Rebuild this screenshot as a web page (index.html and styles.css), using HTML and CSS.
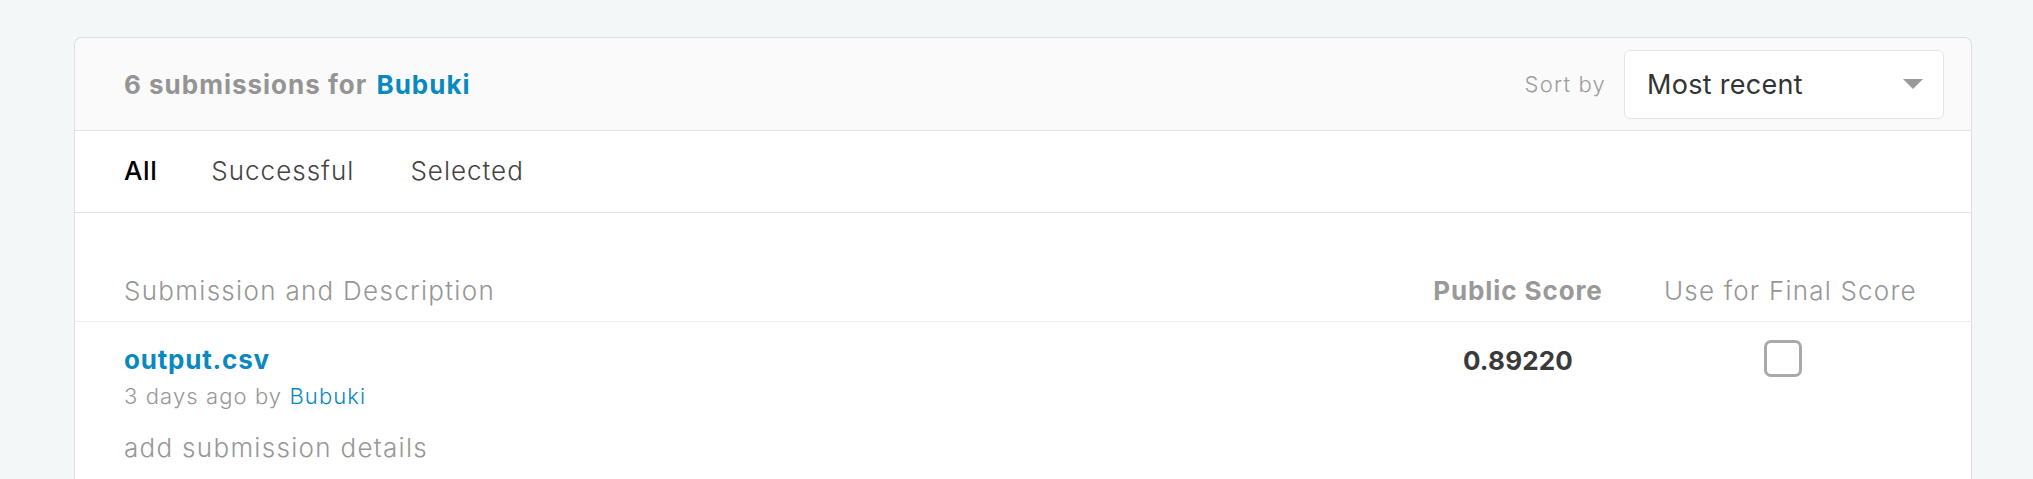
FILE: index.html
```html
<!DOCTYPE html>
<html lang="en">
<head>
<meta charset="utf-8">
<title>Submissions</title>
<link rel="stylesheet" href="styles.css">
</head>
<body>
<div class="page">
  <section class="card">
    <header class="card-header">
      <h1 class="title">6 submissions for <a class="link" href="#">Bubuki</a></h1>
      <div class="sort">
        <span class="sort-label">Sort by</span>
        <div class="select">
          <span class="select-value">Most recent</span>
          <svg class="select-arrow" width="20" height="10" viewBox="0 0 20 10"><path d="M0 0 H20 L10 10 Z" fill="#9a9a9a"/></svg>
        </div>
      </div>
    </header>
    <nav class="tabs">
      <span class="tab active">All</span>
      <span class="tab">Successful</span>
      <span class="tab">Selected</span>
    </nav>
    <div class="table">
      <div class="row head">
        <div class="cell desc">Submission and Description</div>
        <div class="cell score-col">Public Score</div>
        <div class="cell final-col">Use for Final Score</div>
      </div>
      <div class="row body">
        <div class="cell desc">
          <a class="file" href="#">output.csv</a>
          <div class="meta">3 days ago by <a class="link" href="#">Bubuki</a></div>
          <div class="details">add submission details</div>
        </div>
        <div class="cell score">0.89220</div>
        <div class="cell check"><span class="checkbox"></span></div>
      </div>
    </div>
  </section>
</div>
</body>
</html>
```
FILE: styles.css
```css
* { box-sizing: border-box; }
html, body { margin: 0; padding: 0; }
body {
  background: #f4f7f8;
  font-family: Inter, "Noto Sans", sans-serif;
  color: #333;
  height: 479px;
  overflow: hidden;
}
a { text-decoration: none; }
.link { color: #0a89bf; }
.page { padding: 37px 61px 0 74px; }
.card {
  background: #fff;
  border: 1px solid #dcdedf;
  border-bottom: none;
  border-radius: 8px 8px 0 0;
  min-height: 442px;
}
.card-header {
  height: 93px;
  background: #fafafa;
  border-bottom: 1px solid #e3e3e3;
  border-radius: 8px 8px 0 0;
  display: flex;
  align-items: center;
  justify-content: space-between;
  padding: 0 27px 0 49px;
}
.title {
  margin: 0;
  font-size: 26px;
  font-weight: 700;
  color: #949494;
  letter-spacing: 1px;
}
.title .link { margin-left: 2px; }
.sort { display: flex; align-items: center; gap: 18px; }
.sort-label { font-size: 22px; color: #9d9d9d; font-weight: 300; letter-spacing: 1.2px; }
.select {
  width: 320px;
  height: 69px;
  background: #fff;
  border: 1px solid #e6e6e6;
  border-radius: 6px;
  display: flex;
  align-items: center;
  justify-content: space-between;
  padding: 0 20px 0 22px;
}
.select-value { font-size: 27px; color: #333; font-weight: 400; letter-spacing: 0.3px; }
.tabs {
  height: 82px;
  border-bottom: 1px solid #e0e0e0;
  display: flex;
  align-items: flex-end;
  gap: 54px;
  padding: 0 0 26px 49px;
}
.tab { font-size: 26px; color: #444; font-weight: 300; letter-spacing: 1px; line-height: 30px; }
.tab.active { color: #000; font-weight: 500; letter-spacing: 0.6px; }
.tab.active + .tab + .tab { margin-left: 2px; }
.row {
  display: grid;
  grid-template-columns: 1fr 170px 249px;
  column-gap: 61px;
  padding: 0 58px 0 49px;
}
.row.head {
  padding-top: 62px;
  padding-bottom: 14px;
  border-bottom: 1px solid #ececec;
  font-size: 26px;
  line-height: 32px;
  color: #969696;
  font-weight: 300;
  letter-spacing: 1.3px;
}
.score-col { font-weight: 700; text-align: center; color: #999; letter-spacing: 0.9px; white-space: nowrap; }
.final-col { text-align: center; white-space: nowrap; letter-spacing: 1.2px; }
.row.body { padding-top: 21px; }
.file { display: block; color: #0a89bf; font-weight: 700; font-size: 26px; line-height: 34px; letter-spacing: 0.8px; }
.meta { font-size: 22px; line-height: 38px; color: #979797; font-weight: 300; letter-spacing: 1.1px; }
.details { margin-top: 16px; font-size: 26px; line-height: 33px; color: #979797; font-weight: 300; letter-spacing: 1.3px; }
.score { text-align: center; font-weight: 700; font-size: 26px; line-height: 34px; color: #3a3a3a; padding-top: 1px; letter-spacing: 0.2px; }
.check { display: flex; justify-content: center; padding-top: 0; }
.checkbox {
  display: block;
  width: 38px;
  height: 37px;
  margin-top: -3px;
  margin-left: -12px;
  border: 3px solid #a9a9a9;
  border-radius: 7px;
}
```
